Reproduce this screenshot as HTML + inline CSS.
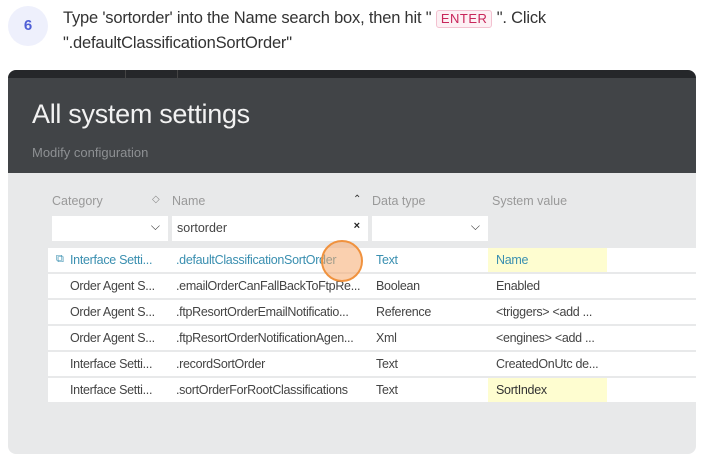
<!DOCTYPE html>
<html><head><style>
*{margin:0;padding:0;box-sizing:border-box}
body{width:703px;height:464px;background:#fff;position:relative;overflow:hidden;font-family:"Liberation Sans",sans-serif}
.a{position:absolute}
.step{left:8px;top:6px;width:40px;height:40px;border-radius:50%;background:#eef0fc;color:#4f5fd6;font-weight:bold;font-size:15px;text-align:center;line-height:40px}
.ins{left:63px;top:6px;font-size:16.5px;color:#333;line-height:25px;letter-spacing:-0.2px}
.kbd{display:inline-block;border:1px solid #f3c1d0;background:#fdf0f4;color:#c8255a;font-size:13px;padding:0 4px;line-height:16px;border-radius:3px;letter-spacing:0.5px}
.panel{left:8px;top:70px;width:688px;height:384px;border-radius:8px;background:#e8e9ea;overflow:hidden}
.strip{left:0;top:0;width:688px;height:8px;background:#25272a}
.hdr{left:0;top:8px;width:688px;height:95px;background:#414447}
.t{font-family:"Liberation Sans",sans-serif}
.row{left:40px;width:648px;height:24px;background:#fff;font-size:12.5px;color:#444;letter-spacing:-0.3px}
.row span{position:absolute;top:5px;white-space:nowrap}
.y{position:absolute;left:440px;top:0;width:119px;height:24px;background:#fefdd0}
.th{top:124px;font-size:12.5px;color:#999}
.inp{top:146px;height:25px;background:#fff;font-size:12.5px;color:#444}
</style></head><body>
<div class="a step">6</div>
<div class="a ins">Type 'sortorder' into the Name search box, then hit " <span class="kbd">ENTER</span> ". Click<br>".defaultClassificationSortOrder"</div>
<div class="a panel">
 <div class="a strip"></div>
 <div class="a" style="left:117px;top:0;width:1px;height:8px;background:#444"></div>
 <div class="a" style="left:169px;top:0;width:1px;height:8px;background:#444"></div>
 <div class="a hdr"></div>
 <div class="a t" style="left:24px;top:29px;font-size:27px;color:#f2f2f2;letter-spacing:-0.3px">All system settings</div>
 <div class="a t" style="left:24px;top:75px;font-size:13px;color:#8d9093">Modify configuration</div>
 <div class="a th t" style="left:44px">Category</div>
 <div class="a th" style="left:144px;font-size:10px;color:#888">◇</div>
 <div class="a th t" style="left:164px">Name</div>
 <div class="a th" style="left:345px;font-size:10px;color:#333">⌃</div>
 <div class="a th t" style="left:364px">Data type</div>
 <div class="a th t" style="left:484px">System value</div>
 <div class="a inp" style="left:44px;width:116px"><span class="a" style="right:8px;top:3px;font-size:12px;color:#333">⌵</span></div>
 <div class="a inp t" style="left:164px;width:196px"><span class="a" style="left:5px;top:5px;color:#444">sortorder</span><span class="a" style="right:8px;top:4px;font-size:11px;color:#222;font-weight:bold">×</span></div>
 <div class="a inp" style="left:364px;width:116px"><span class="a" style="right:8px;top:3px;font-size:12px;color:#333">⌵</span></div>

 <div class="a row t" style="top:178px;color:#3a8fb0"><div class="y"></div><span style="left:8px;font-size:11px">⧉</span><span style="left:22px">Interface Setti...</span><span style="left:128px">.defaultClassificationSortOrder</span><span style="left:328px">Text</span><span style="left:448px">Name</span></div>
 <div class="a row t" style="top:204px"><span style="left:22px">Order Agent S...</span><span style="left:128px">.emailOrderCanFallBackToFtpRe...</span><span style="left:328px">Boolean</span><span style="left:448px">Enabled</span></div>
 <div class="a row t" style="top:230px"><span style="left:22px">Order Agent S...</span><span style="left:128px">.ftpResortOrderEmailNotificatio...</span><span style="left:328px">Reference</span><span style="left:448px">&lt;triggers&gt; &lt;add ...</span></div>
 <div class="a row t" style="top:256px"><span style="left:22px">Order Agent S...</span><span style="left:128px">.ftpResortOrderNotificationAgen...</span><span style="left:328px">Xml</span><span style="left:448px">&lt;engines&gt; &lt;add ...</span></div>
 <div class="a row t" style="top:282px"><span style="left:22px">Interface Setti...</span><span style="left:128px">.recordSortOrder</span><span style="left:328px">Text</span><span style="left:448px">CreatedOnUtc de...</span></div>
 <div class="a row t" style="top:308px"><div class="y"></div><span style="left:22px">Interface Setti...</span><span style="left:128px">.sortOrderForRootClassifications</span><span style="left:328px">Text</span><span style="left:448px;color:#333">SortIndex</span></div>
 <div class="a" style="left:313px;top:170px;width:42px;height:42px;border-radius:50%;border:2px solid #f0923e;background:rgba(245,170,110,0.55)"></div>
</div>
</body></html>
